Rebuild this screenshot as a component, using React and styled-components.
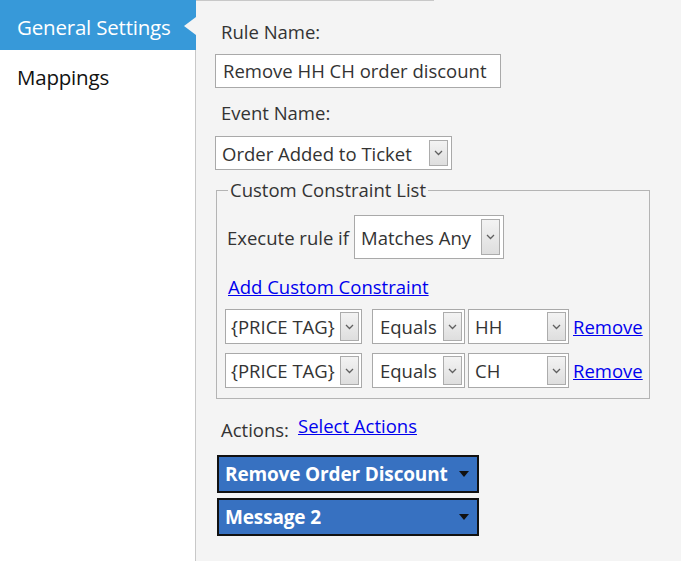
import React from 'react';
import styled, { createGlobalStyle } from 'styled-components';

const GlobalStyle = createGlobalStyle`
  html, body {
    margin: 0;
    padding: 0;
    background: #fff;
  }
  body {
    font-family: "Open Sans", "Noto Sans", sans-serif;
    color: #333;
  }
`;

const Page = styled.div`
  display: flex;
  width: 681px;
  height: 561px;
  overflow: hidden;
`;

const Sidebar = styled.nav`
  width: 195px;
  flex-shrink: 0;
  background: #fff;
  border-right: 1px solid #c8c8c8;
`;

const Tab = styled.div`
  position: relative;
  box-sizing: border-box;
  height: 50px;
  line-height: 46px;
  margin-right: ${(p) => (p.active ? '-1px' : '0')};
  padding: 4px 0 0 17px;
  font-size: 20.5px;
  letter-spacing: -0.2px;
  color: ${(p) => (p.active ? '#fff' : '#111')};
  background: ${(p) => (p.active ? '#3799d9' : 'transparent')};

  &::after {
    content: '';
    display: ${(p) => (p.active ? 'block' : 'none')};
    position: absolute;
    right: 0;
    top: 17px;
    border-style: solid;
    border-width: 9px 12px 9px 0;
    border-color: transparent #f4f4f4 transparent transparent;
  }
`;

const Main = styled.main`
  flex: 1;
  background: #f4f4f4;
`;

const TopRule = styled.div`
  width: 238px;
  height: 1px;
  background: #c8c8c8;
`;

const Content = styled.div`
  padding-left: 19px;
`;

const Label = styled.div`
  font-size: 18.5px;
  line-height: 24px;
  margin: ${(p) => p.mt || 0}px 0 0 6px;
`;

const TextBox = styled.div`
  box-sizing: border-box;
  width: 286px;
  height: 34px;
  margin-top: 10px;
  padding-left: 7px;
  border: 1px solid #a9a9a9;
  background: #fff;
  font-size: 18.5px;
  line-height: 32px;
  white-space: nowrap;
  overflow: hidden;
`;

const SelectBox = styled.div`
  box-sizing: border-box;
  display: flex;
  align-items: stretch;
  flex-shrink: 0;
  width: ${(p) => p.w}px;
  height: ${(p) => p.h}px;
  padding: ${(p) => p.pad || 2}px;
  border: 1px solid #a9a9a9;
  background: #fff;
  font-size: 18.5px;
`;

const SelectValue = styled.span`
  flex: 1;
  display: flex;
  align-items: center;
  padding-left: ${(p) => p.pl || 4}px;
  white-space: nowrap;
  overflow: hidden;
`;

const SelectButton = styled.span`
  box-sizing: border-box;
  width: 19px;
  display: flex;
  align-items: center;
  justify-content: center;
  border: 1px solid #acacac;
  background: linear-gradient(#f3f3f3, #dedede);
`;

const Chevron = () => (
  <svg width="9" height="6" viewBox="0 0 9 6">
    <path d="M1 1 L4.5 4.5 L8 1" fill="none" stroke="#606060" strokeWidth="1.3" />
  </svg>
);

const Select = ({ value, w, h, pad, pl, style }) => (
  <SelectBox w={w} h={h} pad={pad} style={style}>
    <SelectValue pl={pl}>{value}</SelectValue>
    <SelectButton>
      <Chevron />
    </SelectButton>
  </SelectBox>
);

const EventSelect = styled.div`
  margin-top: 11px;
`;

const Fieldset = styled.fieldset`
  box-sizing: border-box;
  width: 434px;
  min-width: 0;
  margin: 8px 0 0 1px;
  padding: 0 8px 10px;
  border: 1px solid #b4b4b4;
`;

const Legend = styled.legend`
  margin-left: 3px;
  padding: 0 2px;
  font-size: 18.5px;
  line-height: 24px;
`;

const ExecuteRow = styled.div`
  display: flex;
  align-items: center;
  margin-top: 13px;
  font-size: 18.5px;
`;

const ExecuteLabel = styled.span`
  margin: 0 5px 0 2px;
`;

const Link = styled.a`
  color: #0000ee;
  text-decoration: underline;
  font-size: 18.5px;
  cursor: pointer;
`;

const AddLink = styled(Link)`
  display: block;
  margin: 16px 0 0 3px;
  line-height: 24px;
`;

const ConstraintList = styled.div`
  display: flex;
  flex-direction: column;
  gap: 9px;
  margin-top: 10px;
`;

const ConstraintRow = styled.div`
  display: flex;
  align-items: center;
  white-space: nowrap;
`;

const RemoveLink = styled(Link)`
  margin-left: 4px;
`;

const ActionsRow = styled.div`
  display: flex;
  align-items: flex-start;
  margin: 19px 0 0 6px;
  line-height: 24px;
`;

const ActionsLabel = styled.span`
  font-size: 18.5px;
`;

const SelectActions = styled(Link)`
  margin: -4px 0 0 9px;
`;

const ActionList = styled.div`
  display: flex;
  flex-direction: column;
  gap: 5px;
  margin: 13px 0 0 2px;
`;

const ActionButton = styled.div`
  box-sizing: border-box;
  display: flex;
  align-items: center;
  justify-content: space-between;
  width: 262px;
  height: 38px;
  padding: 0 8px 0 6px;
  border: 2px solid #111;
  background: #3771c1;
  color: #fff;
  font-size: 19px;
  font-weight: 700;
  letter-spacing: -0.15px;
`;

const Caret = styled.span`
  width: 0;
  height: 0;
  border-style: solid;
  border-width: 6px 5px 0 5px;
  border-color: #111 transparent transparent transparent;
`;

const constraints = [
  { field: '{PRICE TAG}', op: 'Equals', value: 'HH' },
  { field: '{PRICE TAG}', op: 'Equals', value: 'CH' },
];

const actions = ['Remove Order Discount', 'Message 2'];

export default function App() {
  return (
    <Page>
      <GlobalStyle />
      <Sidebar>
        <Tab active>General Settings</Tab>
        <Tab>Mappings</Tab>
      </Sidebar>
      <Main>
        <TopRule />
        <Content>
          <Label mt={19}>Rule Name:</Label>
          <TextBox>Remove HH CH order discount</TextBox>
          <Label mt={13}>Event Name:</Label>
          <EventSelect>
            <Select value="Order Added to Ticket" w={237} h={34} pad={3} pl={3} />
          </EventSelect>
          <Fieldset>
            <Legend>Custom Constraint List</Legend>
            <ExecuteRow>
              <ExecuteLabel>Execute rule if</ExecuteLabel>
              <Select value="Matches Any" w={150} h={44} pad={3} pl={3} />
            </ExecuteRow>
            <AddLink>Add Custom Constraint</AddLink>
            <ConstraintList>
              {constraints.map((c, i) => (
                <ConstraintRow key={i}>
                  <Select value={c.field} w={137} h={35} pad={2} pl={3} />
                  <Select value={c.op} w={93} h={35} pad={2} pl={5} style={{ marginLeft: 10 }} />
                  <Select value={c.value} w={101} h={35} pad={2} pl={4} style={{ marginLeft: 3 }} />
                  <RemoveLink>Remove</RemoveLink>
                </ConstraintRow>
              ))}
            </ConstraintList>
          </Fieldset>
          <ActionsRow>
            <ActionsLabel>Actions:</ActionsLabel>
            <SelectActions>Select Actions</SelectActions>
          </ActionsRow>
          <ActionList>
            {actions.map((a) => (
              <ActionButton key={a}>
                {a}
                <Caret />
              </ActionButton>
            ))}
          </ActionList>
        </Content>
      </Main>
    </Page>
  );
}
